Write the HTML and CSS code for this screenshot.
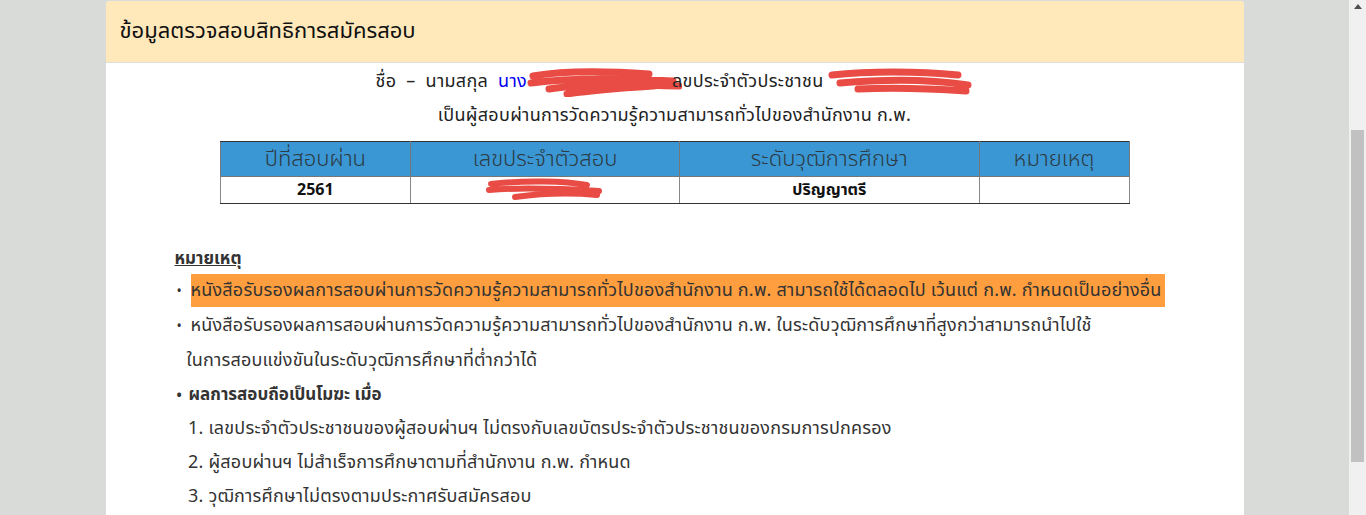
FILE: index.html
```html
<!DOCTYPE html>
<html lang="th">
<head>
<meta charset="utf-8">
<title>ข้อมูลตรวจสอบสิทธิการสมัครสอบ</title>
<link rel="stylesheet" href="styles.css">
</head>
<body>
<div class="viewport">
  <div class="page">
    <div class="panel">
      <div class="panel-heading">ข้อมูลตรวจสอบสิทธิการสมัครสอบ</div>
      <div class="panel-body">
        <p class="name-line">ชื่อ&nbsp;&nbsp;–&nbsp;&nbsp;นามสกุล&nbsp; <span class="blue">นาง<span class="redact r-name"><svg width="155" height="30" viewBox="0 0 155 30"><path d="M6 9 C40 3 80 4 122 7 M4 16 C50 10 100 12 146 14 M22 22 C60 16 100 18 152 19 M40 27 C70 22 110 20 140 18" stroke="#e84c45" stroke-width="7" fill="none" stroke-linecap="round"/></svg></span></span>ลขประจำตัวประชาชน <span class="blue"><span class="redact r-id"><svg width="145" height="30" viewBox="0 0 145 30"><path d="M4 8 C40 4 90 4 130 8 M12 16 C60 12 100 12 140 18 M30 22 C70 20 110 22 138 24" stroke="#e84c45" stroke-width="7" fill="none" stroke-linecap="round"/></svg></span></span></p>
        <p class="pass-line">เป็นผู้สอบผ่านการวัดความรู้ความสามารถทั่วไปของสำนักงาน ก.พ.</p>
        <table class="result">
          <colgroup>
            <col class="c1"><col class="c2"><col class="c3"><col class="c4">
          </colgroup>
          <thead>
            <tr><th>ปีที่สอบผ่าน</th><th>เลขประจำตัวสอบ</th><th>ระดับวุฒิการศึกษา</th><th>หมายเหตุ</th></tr>
          </thead>
          <tbody>
            <tr><td>2561</td><td><span class="redact r-exam"><svg width="120" height="26" viewBox="0 0 120 26"><path d="M6 7 C40 3 80 4 102 8 M4 13 C40 10 80 12 114 14 M30 20 C60 16 90 16 112 18" stroke="#e84c45" stroke-width="6" fill="none" stroke-linecap="round"/></svg></span></td><td>ปริญญาตรี</td><td></td></tr>
          </tbody>
        </table>
        <div class="notes">
          <div class="notes-title">หมายเหตุ</div>
          <div class="line"><span class="dot">•</span><span class="hl">หนังสือรับรองผลการสอบผ่านการวัดความรู้ความสามารถทั่วไปของสำนักงาน ก.พ. สามารถใช้ได้ตลอดไป เว้นแต่ ก.พ. กำหนดเป็นอย่างอื่น</span></div>
          <div class="line"><span class="dot">•</span>หนังสือรับรองผลการสอบผ่านการวัดความรู้ความสามารถทั่วไปของสำนักงาน ก.พ. ในระดับวุฒิการศึกษาที่สูงกว่าสามารถนำไปใช้</div>
          <div class="line cont">ในการสอบแข่งขันในระดับวุฒิการศึกษาที่ต่ำกว่าได้</div>
          <div class="line strong"><span class="dot">•</span>ผลการสอบถือเป็นโมฆะ เมื่อ</div>
          <ol class="void-list">
            <li>เลขประจำตัวประชาชนของผู้สอบผ่านฯ ไม่ตรงกับเลขบัตรประจำตัวประชาชนของกรมการปกครอง</li>
            <li>ผู้สอบผ่านฯ ไม่สำเร็จการศึกษาตามที่สำนักงาน ก.พ. กำหนด</li>
            <li>วุฒิการศึกษาไม่ตรงตามประกาศรับสมัครสอบ</li>
          </ol>
        </div>
      </div>
    </div>
  </div>
  <div class="scrollbar">
    <div class="arrow"></div>
    <div class="thumb"></div>
  </div>
</div>
</body>
</html>
```
FILE: styles.css
```css
* { box-sizing: border-box; }
html, body {
  margin: 0;
  height: 515px;
  overflow: hidden;
}
body {
  font-family: "Noto Sans Thai", "Leelawadee UI", Tahoma, "Noto Sans", sans-serif;
  color: #333;
  background: #d9dbd9;
}
.viewport {
  display: flex;
  height: 515px;
}
.page {
  flex: 1;
  display: flex;
  justify-content: center;
  padding-top: 1px;
}
.panel {
  width: 1138px;
  background: #fff;
  border-radius: 4px 4px 0 0;
  overflow: hidden;
}
.panel-heading {
  background: #ffe9bb;
  border-bottom: 1px solid #ddd;
  height: 62px;
  padding: 0 14px;
  display: flex;
  align-items: center;
  font-size: 22px;
  color: #111;
}
.panel-body {
  padding-top: 2px;
}
.name-line, .pass-line {
  margin: 0;
  text-align: center;
  font-size: 18px;
  letter-spacing: 0.3px;
  line-height: 34px;
  color: #222;
}
.blue { color: #0000ee; }
.redact {
  display: inline-block;
  vertical-align: middle;
  line-height: 0;
}
.r-name { width: 150px; margin-right: -5px; }
.r-id { width: 145px; }
.r-exam { width: 120px; }
.result {
  margin: 8px auto 0;
  width: 910px;
  border-collapse: collapse;
  border: 1px solid #333;
}
.c1 { width: 191px; }
.c2 { width: 269px; }
.c3 { width: 300px; }
.c4 { width: 150px; }
.result th {
  background: #3a97d3;
  color: #2d3b45;
  font-weight: 300;
  font-size: 22px;
  height: 35px;
  padding: 0;
  border: 1px solid #777;
  border-top: 1px solid #333;
}
.result td {
  text-align: center;
  font-weight: bold;
  font-size: 16px;
  height: 27px;
  padding: 0;
  border: 1px solid #888;
  border-bottom: 1px solid #333;
  color: #111;
}
.notes {
  padding: 40px 0 0 69px;
  font-size: 18px;
  letter-spacing: 0.2px;
  line-height: 34px;
}
.notes-title {
  font-weight: bold;
  font-size: 17px;
  letter-spacing: 0;
  text-decoration: underline;
  line-height: 30px;
}
.line { white-space: nowrap; }
.dot {
  display: inline-block;
  width: 16px;
  padding-left: 2px;
  font-size: 14px;
}
.hl {
  background: #ff9e3e;
  display: inline-block;
  line-height: 33px;
  padding-right: 3px;
}
.cont { padding-left: 12px; }
.strong { font-weight: bold; font-size: 17px; letter-spacing: 0; }
.strong .dot { width: 14px; }
.void-list {
  margin: -1px 0 0;
  padding-left: 34px;
}
.void-list li { padding-left: 0; }
.scrollbar {
  width: 17px;
  background: #f0f0f0;
  display: flex;
  flex-direction: column;
  align-items: center;
}
.arrow {
  margin-top: 4px;
  width: 0;
  height: 0;
  border-left: 4px solid transparent;
  border-right: 4px solid transparent;
  border-bottom: 5px solid #505050;
}
.thumb {
  margin-top: 121px;
  width: 13px;
  height: 332px;
  background: #c1c1c1;
}
```
